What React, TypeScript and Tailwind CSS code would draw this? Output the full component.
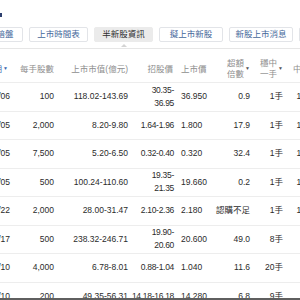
const rows = [
  { date: "2024/09/06", lot: "100", cap: "118.02-143.69", offer: ["30.35-", "36.95"], price: "36.950", over: "0.9", one: "1手", rate: "100.00%" },
  { date: "2024/09/05", lot: "2,000", cap: "8.20-9.80", offer: ["1.64-1.96"], price: "1.800", over: "17.9", one: "1手", rate: "100.00%" },
  { date: "2024/09/05", lot: "7,500", cap: "5.20-6.50", offer: ["0.32-0.40"], price: "0.320", over: "32.4", one: "1手", rate: "100.00%" },
  { date: "2024/09/05", lot: "500", cap: "100.24-110.60", offer: ["19.35-", "21.35"], price: "19.660", over: "0.2", one: "1手", rate: "100.00%" },
  { date: "2024/08/22", lot: "2,000", cap: "28.00-31.47", offer: ["2.10-2.36"], price: "2.180", over: "認購不足", one: "1手", rate: "100.00%" },
  { date: "2024/07/17", lot: "500", cap: "238.32-246.71", offer: ["19.90-", "20.60"], price: "20.600", over: "49.0", one: "8手", rate: "12.50%" },
  { date: "2024/07/10", lot: "4,000", cap: "6.78-8.01", offer: ["0.88-1.04"], price: "1.040", over: "11.6", one: "20手", rate: "5.00%" },
  { date: "2024/07/10", lot: "200", cap: "49.35-56.31", offer: ["14.18-16.18"], price: "14.280", over: "6.8", one: "9手", rate: "11.11%" },
];

const cols = "grid grid-cols-[54px_40px_74px_46px_38px_38px_33px_47px]";

function Tab({ label, width, active = false }: { label: string; width: string; active?: boolean }) {
  return (
    <div className="flex flex-col items-center">
      <div
        className={`${width} h-[15px] flex items-center justify-center rounded-[2px] whitespace-nowrap ${
          active ? "bg-[#ebebeb] text-[#2e2e2e] border border-[#ebebeb]" : "border border-[#e2e4e8] text-[#44679a]"
        }`}
      >
        {label}
      </div>
      {active && (
        <div className="mt-[2px] w-0 h-0 border-l-[3px] border-r-[3px] border-b-[3px] border-l-transparent border-r-transparent border-b-[#d4d4d4]" />
      )}
    </div>
  );
}

function SortHead({ top, bottom }: { top: string; bottom: string }) {
  return (
    <div className="flex items-center justify-end">
      <div className="flex flex-col leading-[11px]">
        <span>{top}</span>
        <span>{bottom}</span>
      </div>
      <span className="text-[5px] text-[#555] ml-[1px]">▼</span>
    </div>
  );
}

export default function App() {
  return (
    <div
      className="relative w-[300px] h-[300px] overflow-hidden bg-white text-[8.5px] text-[#2b2b2b]"
      style={{ fontFamily: '"Liberation Sans", "Noto Sans CJK TC", sans-serif' }}
    >
      <div className="h-[27px] pt-[13px]">
        <div className="w-[2px] h-[4px] bg-[#2d3f6e]" />
      </div>

      {/* tabs */}
      <div className="flex items-start gap-[6px] ml-[-13px] h-[21px]">
        <Tab label="暗盤" width="w-[36px]" />
        <Tab label="上市時間表" width="w-[59px]" />
        <Tab label="半新股資訊" width="w-[59px]" active />
        <Tab label="擬上市新股" width="w-[64px]" />
        <Tab label="新股上市消息" width="w-[64px]" />
        <Tab label="新股專題" width="w-[48px]" />
      </div>

      <div className="border-t border-[#e6e6e6]">
        <div className="ml-[-40px] w-[370px]">
          {/* header */}
          <div className={`${cols} h-[34px] pt-[7px] border-b border-[#ededed] text-[#8e8e8e]`}>
            <div className="flex items-center justify-end pr-[6px] text-[#3a67b0] whitespace-nowrap">
              上市日期<span className="text-[5px] ml-[1px]">▼</span>
            </div>
            <div className="flex items-center justify-end whitespace-nowrap">每手股數</div>
            <div className="flex items-center justify-end whitespace-nowrap">上市市值(億元)</div>
            <div className="flex items-center justify-end pr-[1px] whitespace-nowrap">招股價</div>
            <div className="flex items-center pl-[7px] whitespace-nowrap">上市價</div>
            <SortHead top="超額" bottom="倍數" />
            <SortHead top="穩中" bottom="一手" />
            <div className="flex items-center pl-[10px] whitespace-nowrap">中籤率</div>
          </div>

          {rows.map((r, i) => (
            <div key={i} className={`${cols} h-[28.5px] border-b border-[#ededed]`}>
              <div className="flex items-center justify-end pr-[4px] whitespace-nowrap">{r.date}</div>
              <div className="flex items-center justify-end">{r.lot}</div>
              <div className="flex items-center justify-end whitespace-nowrap">{r.cap}</div>
              <div className="flex flex-col items-end justify-center leading-[13px] whitespace-nowrap tracking-[-0.3px]">
                {r.offer.map((o) => (
                  <span key={o}>{o}</span>
                ))}
              </div>
              <div className="flex items-center pl-[7px]">{r.price}</div>
              <div className="flex items-center justify-end whitespace-nowrap">{r.over}</div>
              <div className="flex items-center justify-end">{r.one}</div>
              <div className="flex items-center justify-end">{r.rate}</div>
            </div>
          ))}
        </div>
      </div>

      <div className="absolute left-0 right-0 bottom-0 h-[2px] bg-[#5f5f5f]" />
    </div>
  );
}
